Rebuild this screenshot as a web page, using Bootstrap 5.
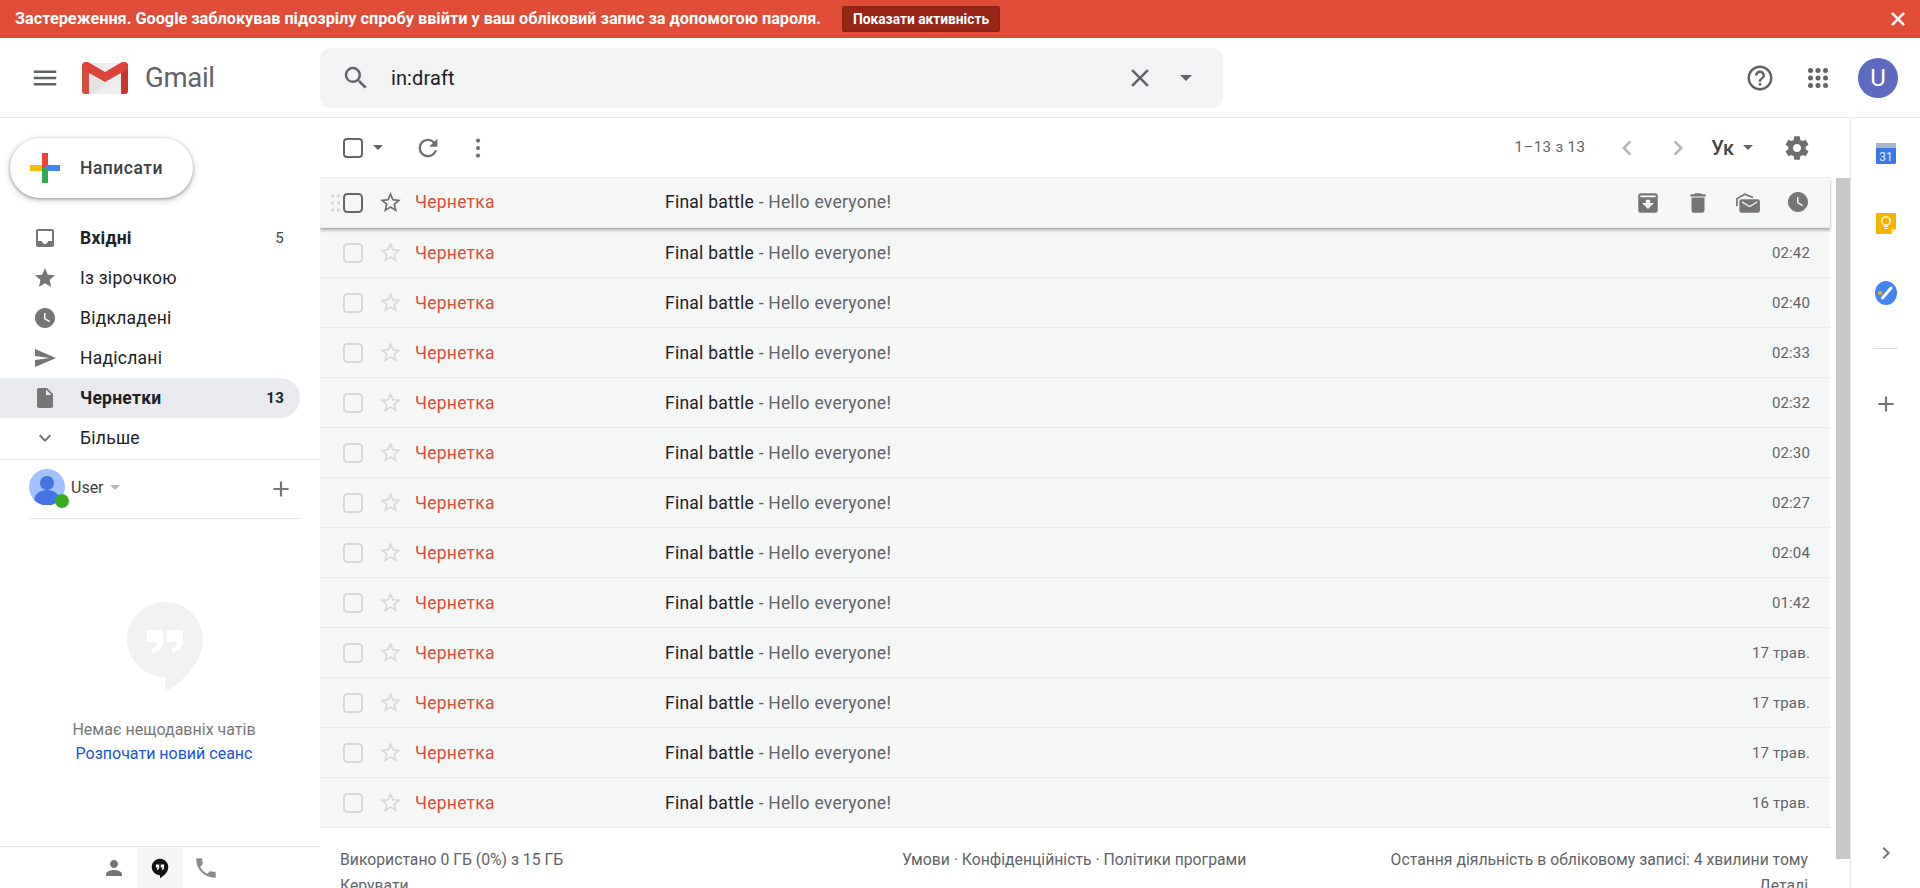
<!DOCTYPE html>
<html lang="uk">
<head>
    <meta charset="UTF-8">
    <meta name="viewport" content="width=device-width, initial-scale=1.0">
    <title>Gmail</title>
    <link href="https://cdn.jsdelivr.net/npm/bootstrap@5.3.0/dist/css/bootstrap.min.css" rel="stylesheet">
    <style>
        html, body { height: 888px; overflow: hidden; }
        body { font-family: Roboto, "Liberation Sans", sans-serif; color: #202124; background: #fff; }
        a { text-decoration: none; }
        .ico { width: 30px; height: 30px; fill: #5f6368; flex: none; display: block; }
        .caret-down { width: 0; height: 0; flex: none; border-left: 5px solid transparent; border-right: 5px solid transparent; border-top: 5px solid #5f6368; }

        .alert-bar { height: 38px; background: #df4c38; color: #fff; font-size: 16.25px; font-weight: 700; padding-left: 15px; padding-right: 12px; }
        .alert-btn { background: #962518; color: #fff; font-size: 13.75px; font-weight: 700; height: 26px; width: 158px; margin-left: 21px; padding: 0; border: 1px solid #8a2216; border-radius: 2px; }
        .alert-close { width: 22px; height: 22px; fill: #fff; stroke: #fff; stroke-width: 1; margin-left: auto; margin-right: -1px; }

        .top-bar { height: 80px; border-bottom: 1px solid #e8eaed; }
        .logo-zone { width: 320px; padding-left: 30px; }
        .logo-svg { width: 46px; height: 32px; margin-left: 22px; flex: none; }
        .logo-word { font-size: 27.5px; color: #5f6368; margin-left: 17px; line-height: 1; letter-spacing: -.3px; }
        .search-box { width: 903px; height: 60px; background: #f1f3f4; border-radius: 10px; padding-left: 21px; }
        .search-text { font-size: 20px; margin-left: 20px; color: #202124; letter-spacing: .1px; }
        .search-clear { margin-left: auto; }
        .search-caret { margin-left: 25px; margin-right: 31px; border-left-width: 6px; border-right-width: 6px; border-top-width: 6px; }
        .top-right { margin-left: auto; margin-right: 22px; }
        .help-ico { margin-right: 28px; }
        .avatar-u { width: 40px; height: 40px; background: #5c6bc0; color: #fff; font-size: 24px; margin-left: 25px; }

        .side { width: 320px; flex: none; }
        .compose-btn { width: 183px; height: 60px; margin: 20px 0 20px 10px; background: #fff; border-radius: 30px; border: 0; padding: 0 0 0 20px; box-shadow: 0 1px 3px rgba(60,64,67,.45), 0 2px 6px 1px rgba(60,64,67,.2); font-size: 17.5px; font-weight: 500; color: #3c4043; letter-spacing: .5px; }
        .compose-btn svg { width: 30px; height: 30px; margin-right: 20px; }
        .nav-line { height: 40px; width: 300px; padding-left: 33px; padding-right: 16px; font-size: 17.5px; color: #202124; border-radius: 0 20px 20px 0; letter-spacing: .25px; }
        .nav-line .ico { width: 24px; height: 24px; margin-right: 23px; fill: #757575; }
        .nav-line.is-strong { font-weight: 700; }
        .nav-line.is-open { background: #e8eaed; }
        .nav-count { margin-left: auto; font-size: 15px; color: #444; font-weight: 400; }
        .is-open .nav-count { font-weight: 700; color: #202124; }
        .side-rule { border-bottom: 1px solid #e8eaed; padding-bottom: 1px; }
        .user-strip { margin-left: 29px; width: 271px; height: 59px; border-bottom: 1px solid #e8eaed; padding-top: 9px; }
        .user-pic { width: 36px; height: 36px; position: relative; flex: none; }
        .online-dot { position: absolute; right: -4px; bottom: -3px; width: 14px; height: 14px; border-radius: 50%; background: #37ad20; }
        .user-name { font-size: 16px; margin-left: 6px; margin-top: 7px; color: #3c4043; }
        .user-caret { margin-left: 6px; margin-top: 16px; border-top-color: #b5b5b5; }
        .user-add { width: 26px; height: 26px; margin-left: auto; margin-right: 6px; margin-top: 7px; fill: #757575; }
        .chat-empty { margin-top: 83px; padding-left: 8px; }
        .bubble { width: 76px; height: 90px; margin-left: 2px; }
        .chat-note { font-size: 16px; color: #777; margin-top: 26px; line-height: 24px; }
        .chat-link { font-size: 16px; color: #1a55d3; line-height: 24px; }
        .side-tabs { margin-top: auto; height: 42px; border-top: 1px solid #e8eaed; padding-left: 91px; padding-top: 1px; }
        .tab-cell { width: 46px; height: 40px; }
        .tab-cell.is-on { background: #f5f5f5; }
        .tab-person { width: 24px; height: 24px; fill: #757575; }
        .tab-phone { width: 26px; height: 26px; fill: #8a8a8a; }

        .mail-pane { width: 1530px; flex: none; min-height: 0; }
        .tool-bar { height: 59px; padding-left: 23px; padding-right: 39px; }
        .tool-bar .ico { fill: #6e6e6e; }
        .tb-caret { margin-left: 10px; }
        .tb-refresh { width: 28px; height: 28px; margin-left: 31px; }
        .tb-dots { margin-left: 21px; }
        .tb-prev { margin-left: 27px; }
        .tb-next { margin-left: 21px; }
        .tb-lang { margin-left: 18px; }
        .tb-lang-caret { margin-left: 9px; }
        .tb-gear { width: 28px; height: 28px; margin-left: 30px; }
        .head-box { width: 20px; height: 20px; margin: 0; background-color: transparent; border: 2.5px solid #666; border-radius: 2px; flex: none; }
        .count-txt { font-size: 15px; color: #5f6368; margin-left: auto; letter-spacing: .4px; }
        .lang-txt { font-size: 20px; font-weight: 500; color: #444; line-height: 1; }

        .mail-list { width: 1510px; flex: none; }
        .mail-line { height: 50px; padding-left: 8px; padding-right: 20px; background: #f5f7f7; border-bottom: 1px solid #e8eaed; font-size: 17.5px; letter-spacing: .25px; }
        .mail-line.is-first { height: 51px; border-top: 1px solid #e8eaed; position: relative; box-shadow: 0 2px 3px rgba(60,64,67,.45); z-index: 2; }
        .mail-line:not(.is-first) .line-txt { padding-top: 2px; }
        .grip { width: 15px; flex: none; visibility: hidden; }
        .is-first .grip { visibility: visible; }
        .mail-line .head-box { border-color: #d6d7d7; margin-right: 15px; }
        .is-first.mail-line .head-box { border-color: #666; }
        .star-ico { width: 25px; height: 25px; fill: #d6d7d7; margin-right: 12px; flex: none; }
        .is-first .star-ico { fill: #6e6e6e; }
        .from-txt { width: 250px; flex: none; color: #dd4b39; }
        .subject-txt { color: #202124; }
        .snippet-txt { color: #5f6368; }
        .time-txt { margin-left: auto; font-size: 15px; color: #5f6368; letter-spacing: .15px; }
        .hover-acts { margin-left: auto; margin-right: -13px; }
        .hover-cell { width: 50px; }
        .hover-cell .ico { width: 26px; height: 26px; fill: #757575; }
        .hover-cell:last-child .ico { width: 24px; height: 24px; }

        .list-foot { padding: 19px 22px 0 20px; font-size: 15.75px; color: #5f6368; line-height: 26px; }
        .foot-left { width: 562px; flex: none; }
        .scroll-track { width: 14px; flex: none; margin-left: 6px; }
        .scroll-thumb { height: 681px; margin-top: 1px; background: #c8c8c8; }

        .app-rail { width: 70px; flex: none; border-left: 1px solid #e8eaed; }
        .rail-cal { margin-top: 23px; }
        .rail-keep, .rail-tasks { margin-top: 46px; }
        .rail-rule { width: 25px; height: 1px; background: #dadce0; margin-top: 43px; margin-bottom: 42px; }
        .rail-add { width: 26px; height: 26px; fill: #757575; }
        .rail-more { width: 24px; height: 24px; margin-top: auto; margin-bottom: 23px; fill: #757575; }
    </style>
</head>
<body class="d-flex flex-column">
    <svg class="d-none" xmlns="http://www.w3.org/2000/svg">
        <symbol id="i-menu" viewBox="0 0 24 24"><path d="M3 18h18v-2H3v2zm0-5h18v-2H3v2zm0-7v2h18V6H3z"/></symbol>
        <symbol id="i-search" viewBox="0 0 24 24"><path d="M15.5 14h-.79l-.28-.27A6.471 6.471 0 0 0 16 9.5 6.5 6.5 0 1 0 9.5 16c1.61 0 3.09-.59 4.23-1.57l.27.28v.79l5 4.99L20.49 19l-4.99-5zm-6 0C7.01 14 5 11.99 5 9.5S7.01 5 9.5 5 14 7.01 14 9.5 11.99 14 9.5 14z"/></symbol>
        <symbol id="i-close" viewBox="0 0 24 24"><path d="M19 6.41L17.59 5 12 10.59 6.41 5 5 6.41 10.59 12 5 17.59 6.41 19 12 13.41 17.59 19 19 17.59 13.41 12z"/></symbol>
        <symbol id="i-help" viewBox="0 0 24 24"><path d="M11 18h2v-2h-2v2zm1-16C6.48 2 2 6.48 2 12s4.48 10 10 10 10-4.48 10-10S17.52 2 12 2zm0 18c-4.41 0-8-3.59-8-8s3.59-8 8-8 8 3.59 8 8-3.59 8-8 8zm0-14c-2.21 0-4 1.79-4 4h2c0-1.1.9-2 2-2s2 .9 2 2c0 2-3 1.75-3 5h2c0-2.25 3-2.5 3-5 0-2.21-1.79-4-4-4z"/></symbol>
        <symbol id="i-apps" viewBox="0 0 24 24"><circle cx="6" cy="6" r="2"/><circle cx="12" cy="6" r="2"/><circle cx="18" cy="6" r="2"/><circle cx="6" cy="12" r="2"/><circle cx="12" cy="12" r="2"/><circle cx="18" cy="12" r="2"/><circle cx="6" cy="18" r="2"/><circle cx="12" cy="18" r="2"/><circle cx="18" cy="18" r="2"/></symbol>
        <symbol id="i-refresh" viewBox="0 0 24 24"><path d="M17.65 6.35A7.958 7.958 0 0 0 12 4c-4.42 0-7.99 3.58-7.99 8s3.57 8 7.99 8c3.73 0 6.84-2.55 7.73-6h-2.08A5.99 5.99 0 0 1 12 18c-3.31 0-6-2.69-6-6s2.69-6 6-6c1.66 0 3.14.69 4.22 1.78L13 11h7V4l-2.35 2.35z"/></symbol>
        <symbol id="i-dots" viewBox="0 0 24 24"><circle cx="12" cy="6" r="1.7"/><circle cx="12" cy="12" r="1.7"/><circle cx="12" cy="18" r="1.7"/></symbol>
        <symbol id="i-gear" viewBox="0 0 24 24"><path d="M19.43 12.98c.04-.32.07-.64.07-.98s-.03-.66-.07-.98l2.11-1.65c.19-.15.24-.42.12-.64l-2-3.46c-.12-.22-.39-.3-.61-.22l-2.49 1c-.52-.4-1.08-.73-1.69-.98l-.38-2.65A.488.488 0 0 0 14 2h-4c-.25 0-.46.18-.49.42l-.38 2.65c-.61.25-1.17.59-1.69.98l-2.49-1c-.23-.09-.49 0-.61.22l-2 3.46c-.13.22-.07.49.12.64l2.11 1.65c-.04.32-.07.65-.07.98s.03.66.07.98l-2.11 1.65c-.19.15-.24.42-.12.64l2 3.46c.12.22.39.3.61.22l2.49-1c.52.4 1.08.73 1.69.98l.38 2.65c.03.24.24.42.49.42h4c.25 0 .46-.18.49-.42l.38-2.65c.61-.25 1.17-.59 1.69-.98l2.49 1c.23.09.49 0 .61-.22l2-3.46c.12-.22.07-.49-.12-.64l-2.11-1.65zM12 15.5c-1.93 0-3.5-1.57-3.5-3.5s1.57-3.5 3.5-3.5 3.5 1.57 3.5 3.5-1.57 3.5-3.5 3.5z"/></symbol>
        <symbol id="i-star-o" viewBox="0 0 24 24"><path d="M22 9.24l-7.19-.62L12 2 9.19 8.63 2 9.24l5.46 4.73L5.82 21 12 17.27 18.18 21l-1.63-7.03L22 9.24zM12 15.4l-3.76 2.27 1-4.28-3.32-2.88 4.38-.38L12 6.1l1.71 4.04 4.38.38-3.32 2.88 1 4.28L12 15.4z"/></symbol>
        <symbol id="i-star" viewBox="0 0 24 24"><path d="M12 17.27L18.18 21l-1.64-7.03L22 9.24l-7.19-.61L12 2 9.19 8.63 2 9.24l5.46 4.73L5.82 21z"/></symbol>
        <symbol id="i-inbox" viewBox="0 0 24 24"><path d="M19 3H4.99c-1.11 0-1.98.89-1.98 2L3 19c0 1.1.88 2 1.99 2H19c1.1 0 2-.9 2-2V5c0-1.11-.9-2-2-2zm0 12h-4c0 1.66-1.35 3-3 3s-3-1.34-3-3H4.99V5H19v10z"/></symbol>
        <symbol id="i-clock" viewBox="0 0 24 24"><path d="M12 2C6.48 2 2 6.48 2 12s4.48 10 10 10 10-4.48 10-10S17.52 2 12 2zm4.2 14.2L11 13V7h1.5v5.2l4.5 2.7-.8 1.3z"/></symbol>
        <symbol id="i-send" viewBox="0 0 24 24"><path d="M2.01 21L23 12 2.01 3 2 10l15 2-15 2z"/></symbol>
        <symbol id="i-file" viewBox="0 0 24 24"><path d="M6 2c-1.1 0-1.99.9-1.99 2L4 20c0 1.1.89 2 1.99 2H18c1.1 0 2-.9 2-2V8l-6-6H6zm7 7V3.5L18.5 9H13z"/></symbol>
        <symbol id="i-down" viewBox="0 0 24 24"><path d="M16.59 8.59L12 13.17 7.41 8.59 6 10l6 6 6-6z"/></symbol>
        <symbol id="i-left" viewBox="0 0 24 24"><path d="M15.41 7.41L14 6l-6 6 6 6 1.41-1.41L10.83 12z"/></symbol>
        <symbol id="i-right" viewBox="0 0 24 24"><path d="M10 6L8.59 7.41 13.17 12l-4.58 4.59L10 18l6-6z"/></symbol>
        <symbol id="i-plus" viewBox="0 0 24 24"><path d="M19 13h-6v6h-2v-6H5v-2h6V5h2v6h6v2z"/></symbol>
        <symbol id="i-archive" viewBox="0 0 24 24"><path d="M5 3h14a2 2 0 0 1 2 2v14a2 2 0 0 1-2 2H5a2 2 0 0 1-2-2V5a2 2 0 0 1 2-2zm0 2v1.6h14V5H5zm7 12.5l5.5-5.5H14v-3h-4v3H6.500z"/></symbol>
        <symbol id="i-trash" viewBox="0 0 24 24"><path d="M6 19c0 1.1.9 2 2 2h8c1.1 0 2-.9 2-2V7H6v12zM19 4h-3.500l-1-1h-5l-1 1H5v2h14V4z"/></symbol>
        <symbol id="i-read" viewBox="0 0 24 24"><path d="M1 15V7.500L9 3l8 3.200-.6 1.400L9 4.800 2.600 8.400V15z"/><path d="M6 8.500h15a2 2 0 0 1 2 2V19a2 2 0 0 1-2 2H6a2 2 0 0 1-2-2v-8.500a2 2 0 0 1 2-2zm.5 3.200l7 4.300 7-4.300v-1.400l-7 4.200-7-4.200z"/></symbol>
        <symbol id="i-person" viewBox="0 0 24 24"><path d="M12 12c2.210 0 4-1.790 4-4s-1.790-4-4-4-4 1.790-4 4 1.790 4 4 4zm0 2c-2.670 0-8 1.340-8 4v2h16v-2c0-2.660-5.330-4-8-4z"/></symbol>
        <symbol id="i-phone" viewBox="0 0 24 24"><path d="M6.620 10.790c1.440 2.830 3.760 5.140 6.590 6.590l2.200-2.200c.27-.27.67-.36 1.020-.24 1.120.37 2.330.57 3.570.57.55 0 1 .45 1 1V20c0 .55-.45 1-1 1-9.390 0-17-7.610-17-17 0-.55.45-1 1-1h3.500c.55 0 1 .45 1 1 0 1.250.2 2.450.57 3.570.11.35.03.74-.25 1.020l-2.200 2.200z"/></symbol>
    </svg>

    <div class="alert-bar d-flex align-items-center flex-shrink-0">
        <span>Застереження. Google заблокував підозрілу спробу ввійти у ваш обліковий запис за допомогою пароля.</span>
        <button class="alert-btn" type="button">Показати активність</button>
        <svg class="alert-close"><use href="#i-close"/></svg>
    </div>

    <header class="top-bar d-flex align-items-center flex-shrink-0">
        <div class="logo-zone d-flex align-items-center">
            <svg class="ico"><use href="#i-menu"/></svg>
            <svg class="logo-svg" viewBox="0 0 46 32">
                <rect x="2" y="1" width="42" height="31" rx="2" fill="#ededed"/>
                <path d="M6 32V10l17 12-11 10z" fill="#e3e3e3"/>
                <path d="M0 3.500A3 3 0 0 1 5 1l2 1v30H3a3 3 0 0 1-3-3z" fill="#d54c3f"/>
                <path d="M46 3.500A3 3 0 0 0 41 1l-2 1v30h4a3 3 0 0 0 3-3z" fill="#c5352a"/>
                <path d="M0 4l3-4h3l17 10L40 0h3l3 4v3L23 20 0 7z" fill="#db4437"/>
            </svg>
            <span class="logo-word">Gmail</span>
        </div>
        <div class="search-box d-flex align-items-center">
            <svg class="ico"><use href="#i-search"/></svg>
            <span class="search-text">in:draft</span>
            <svg class="ico search-clear"><use href="#i-close"/></svg>
            <span class="caret-down search-caret"></span>
        </div>
        <div class="top-right d-flex align-items-center">
            <svg class="ico help-ico"><use href="#i-help"/></svg>
            <svg class="ico"><use href="#i-apps"/></svg>
            <div class="avatar-u rounded-circle d-flex align-items-center justify-content-center">U</div>
        </div>
    </header>

    <div class="d-flex flex-grow-1 overflow-hidden">
        <aside class="side d-flex flex-column">
            <div class="side-rule">
                <button class="compose-btn d-flex align-items-center" type="button">
                    <svg viewBox="0 0 30 30">
                        <rect x="0" y="12" width="13" height="6" fill="#fbbc04"/>
                        <rect x="12" y="0" width="6" height="15" fill="#ea4335"/>
                        <rect x="15" y="12" width="15" height="6" fill="#4285f4"/>
                        <rect x="12" y="15" width="6" height="15" fill="#34a853"/>
                    </svg>
                    Написати
                </button>
                <ul class="list-unstyled m-0" id="navList"></ul>
            </div>

            <div class="user-strip d-flex align-items-start">
                <div class="user-pic">
                    <svg viewBox="0 0 36 36" width="36" height="36">
                        <circle cx="18" cy="18" r="18" fill="#a0c3ff"/>
                        <circle cx="18" cy="14" r="7" fill="#4374e0"/>
                        <path d="M5 31c1-7 7-10 13-10s12 3 13 10a18 18 0 0 1-26 0z" fill="#4374e0"/>
                    </svg>
                    <span class="online-dot"></span>
                </div>
                <span class="user-name">User</span>
                <span class="caret-down user-caret"></span>
                <svg class="ico user-add"><use href="#i-plus"/></svg>
            </div>

            <div class="chat-empty d-flex flex-column align-items-center">
                <svg class="bubble" viewBox="0 0 76 90">
                    <path d="M38 0c21 0 38 17 38 37 0 24-20 43-38 53V75C17 75 0 58 0 37 0 17 17 0 38 0z" fill="#f1f1f1"/>
                    <path d="M20 28h16v12c0 6-6 10-11 11v-5c3 0 5-2 5-6H20z" fill="#fff"/>
                    <path d="M40 28h16v12c0 6-6 10-11 11v-5c3 0 5-2 5-6H40z" fill="#fff"/>
                </svg>
                <div class="chat-note">Немає нещодавніх чатів</div>
                <a class="chat-link" href="#">Розпочати новий сеанс</a>
            </div>

            <div class="side-tabs d-flex">
                <div class="tab-cell d-flex align-items-center justify-content-center"><svg class="ico tab-person"><use href="#i-person"/></svg></div>
                <div class="tab-cell is-on d-flex align-items-center justify-content-center">
                    <svg width="18" height="21" viewBox="0 0 24 28">
                        <path d="M12 1c6 0 11 5 11 11 0 7-6 12-11 15v-4C6 23 1 18 1 12 1 6 6 1 12 1z" fill="#111"/>
                        <path d="M6.500 8.500h4.500v4c0 2-1.500 3-3 3.500v-2c.8 0 1-.7 1-1.500H6.500zM13 8.500h4.500v4c0 2-1.500 3-3 3.500v-2c.8 0 1-.7 1-1.500H13z" fill="#fff"/>
                    </svg>
                </div>
                <div class="tab-cell d-flex align-items-center justify-content-center"><svg class="ico tab-phone"><use href="#i-phone"/></svg></div>
            </div>
        </aside>

        <main class="mail-pane d-flex flex-column">
            <div class="tool-bar d-flex align-items-center flex-shrink-0">
                <input class="form-check-input head-box" type="checkbox" aria-label="Вибрати">
                <span class="caret-down tb-caret"></span>
                <svg class="ico tb-refresh"><use href="#i-refresh"/></svg>
                <svg class="ico tb-dots"><use href="#i-dots"/></svg>
                <span class="count-txt">1–13 з 13</span>
                <svg class="ico tb-prev opacity-50"><use href="#i-left"/></svg>
                <svg class="ico tb-next opacity-50"><use href="#i-right"/></svg>
                <span class="lang-txt tb-lang">Ук</span>
                <span class="caret-down tb-lang-caret"></span>
                <svg class="ico tb-gear"><use href="#i-gear"/></svg>
            </div>
            <div class="d-flex flex-grow-1 overflow-hidden">
                <div class="mail-list">
                    <div id="mailRows"></div>
                    <div class="list-foot d-flex">
                        <div class="foot-left">Використано 0 ГБ (0%) з 15 ГБ<br>Керувати</div>
                        <div>Умови · Конфіденційність · Політики програми</div>
                        <div class="text-end ms-auto">Остання діяльність в обліковому записі: 4 хвилини тому<br>Деталі</div>
                    </div>
                </div>
                <div class="scroll-track"><div class="scroll-thumb"></div></div>
            </div>
        </main>

        <div class="app-rail d-flex flex-column align-items-center">
            <svg class="rail-cal" width="24" height="24" viewBox="0 0 24 24">
                <rect x="2" y="2" width="20" height="21" rx="1.500" fill="#3a78e8"/>
                <rect x="2" y="2" width="20" height="5" fill="#a9b6c8"/>
                <text x="12" y="20" text-anchor="middle" font-family="Roboto" font-size="12" fill="#e4edff">31</text>
            </svg>
            <svg class="rail-keep" width="24" height="24" viewBox="0 0 24 24">
                <path d="M3 2h18a1 1 0 0 1 1 1v15l-5 5H3a1 1 0 0 1-1-1V3a1 1 0 0 1 1-1z" fill="#f4b400"/>
                <path d="M17 23v-5h5z" fill="#f8e2a0"/>
                <circle cx="12" cy="10" r="4.200" fill="none" stroke="#fff" stroke-width="1.300"/>
                <path d="M10 15.500h4M10.500 17.500h3" stroke="#fff" stroke-width="1.200"/>
            </svg>
            <svg class="rail-tasks" width="24" height="24" viewBox="0 0 24 24">
                <ellipse cx="12" cy="12" rx="11" ry="12" fill="#4285f4"/>
                <path d="M8.500 17l8.500-10" stroke="#fff" stroke-width="3" stroke-linecap="round"/>
                <circle cx="6" cy="12" r="2" fill="#f4b400"/>
            </svg>
            <div class="rail-rule"></div>
            <svg class="ico rail-add"><use href="#i-plus"/></svg>
            <svg class="ico rail-more"><use href="#i-right"/></svg>
        </div>
    </div>

    <script>
        const navItems = [
            { icon: 'i-inbox', label: 'Вхідні', count: '5', strong: true },
            { icon: 'i-star', label: 'Із зірочкою' },
            { icon: 'i-clock', label: 'Відкладені' },
            { icon: 'i-send', label: 'Надіслані' },
            { icon: 'i-file', label: 'Чернетки', count: '13', strong: true, open: true },
            { icon: 'i-down', label: 'Більше' }
        ];
        document.getElementById('navList').innerHTML = navItems.map(item => `
            <li>
                <a href="#" class="nav-line d-flex align-items-center ${item.strong ? 'is-strong' : ''} ${item.open ? 'is-open' : ''}">
                    <svg class="ico"><use href="#${item.icon}"/></svg>
                    <span>${item.label}</span>
                    ${item.count ? `<span class="nav-count">${item.count}</span>` : ''}
                </a>
            </li>`).join('');

        const times = ['', '02:42', '02:40', '02:33', '02:32', '02:30', '02:27', '02:04', '01:42', '17 трав.', '17 трав.', '17 трав.', '16 трав.'];
        const hoverIcons = ['i-archive', 'i-trash', 'i-read', 'i-clock'];
        document.getElementById('mailRows').innerHTML = times.map((time, i) => `
            <div class="mail-line d-flex align-items-center ${i === 0 ? 'is-first' : ''}">
                <svg class="grip" width="10" height="18" viewBox="0 0 10 18" fill="#d5d6d6">
                    <circle cx="2" cy="2" r="1.700"/><circle cx="8" cy="2" r="1.700"/>
                    <circle cx="2" cy="9" r="1.700"/><circle cx="8" cy="9" r="1.700"/>
                    <circle cx="2" cy="16" r="1.700"/><circle cx="8" cy="16" r="1.700"/>
                </svg>
                <input class="form-check-input head-box" type="checkbox" aria-label="Вибрати">
                <svg class="star-ico"><use href="#i-star-o"/></svg>
                <span class="from-txt line-txt">Чернетка</span>
                <span class="line-txt"><span class="subject-txt">Final battle</span><span class="snippet-txt"> - Hello everyone!</span></span>
                ${i === 0
                    ? `<div class="hover-acts d-flex">${hoverIcons.map(id => `<div class="hover-cell d-flex justify-content-center"><svg class="ico"><use href="#${id}"/></svg></div>`).join('')}</div>`
                    : `<span class="time-txt line-txt">${time}</span>`}
            </div>`).join('');
    </script>
</body>
</html>
